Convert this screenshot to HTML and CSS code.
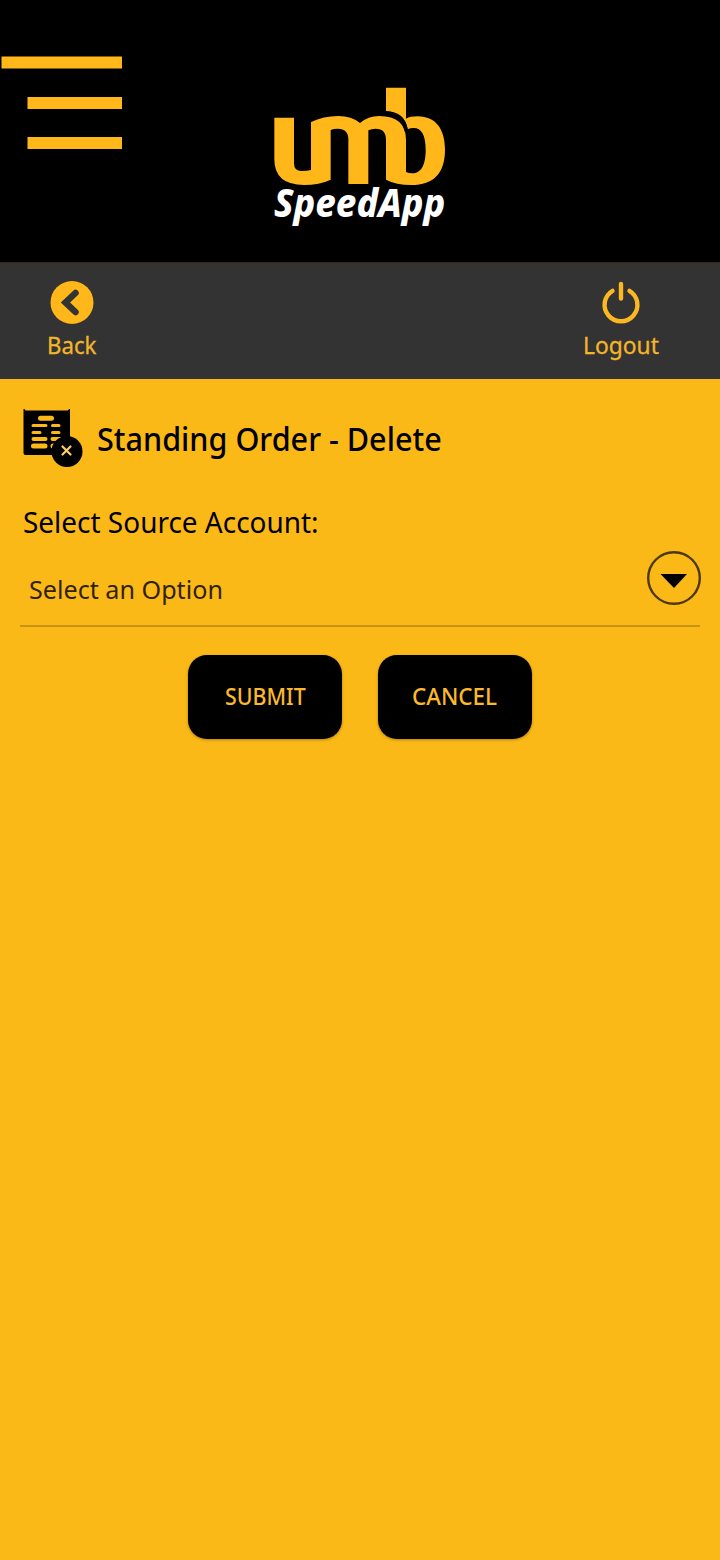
FILE: index.html
```html
<!DOCTYPE html>
<html lang="en">
<head>
<meta charset="utf-8">
<title>Standing Order - Delete</title>
<link rel="stylesheet" href="styles.css">
</head>
<body>
<header class="header">
  <svg class="menu" viewBox="0 0 124 96"><path d="M1.500 2.500h120.500v12H1.500zM27.500 43h94.500v12H27.500zM27.500 83h94.500v12H27.500z"/></svg>
  <svg class="logo" viewBox="0 0 600 480">
    <path class="gold" d="M43 113H102V250Q102 273 124 273Q142 273 153 270V126Q190 108 235 108Q275 108 300 129Q324 108 358 108Q438 108 438 180V276Q446 280 457 280C486 280 497 250 497 210C497 164 484 144 461 144Q450 144 443 148Q435 95 378 93V23H438V116Q450 109 473 109C529 109 555 150 555 209C555 278 522 315 454 315Q408 315 378 299V180Q378 146 347 146Q335 146 325 151V312H265V178Q265 146 233 146Q221 146 212 150V299Q178 315 132 315Q43 315 43 238Z"/>
    <path class="arc" d="M376 99Q431 102 439 154"/>
    <text class="brand" x="42" y="412" textLength="514" lengthAdjust="spacingAndGlyphs">SpeedApp</text>
  </svg>
</header>
<nav class="toolbar">
  <a class="tool">
    <svg class="tool-icon" viewBox="0 0 44 44"><circle class="gold" cx="22" cy="21.500" r="21.500"/><path class="chevron" d="M25.500 12L15.500 21.500L25.500 31"/></svg>
    <span class="tool-label back-label">Back</span>
  </a>
  <a class="tool">
    <svg class="tool-icon" viewBox="0 0 44 44"><path class="power" d="M13.500 9.800A16.400 16.400 0 1 0 30.500 9.800M22 3V17.500"/></svg>
    <span class="tool-label logout-label">Logout</span>
  </a>
</nav>
<main class="content">
  <div class="heading">
    <svg class="doc" viewBox="0 0 60 60">
      <path d="M.5 1H1.500L2.500 2.500H45L46 1H47V47H2.500Q.5 47 .5 45Z"/>
      <path class="page" d="M10 17.500H23M29.500 17.500H36M10 24.500H17M29.500 24.500H36"/>
      <path class="page medium" d="M10.500 31H22.500M29.500 31H37"/>
      <path class="page bold" d="M17.500 10.300H28.500M10.500 38H22M30 38H35"/>
      <circle cx="44" cy="43.500" r="15.500"/>
      <path class="cross" d="M39.500 38.500L47.500 46.500M47.500 38.500L39.500 46.500"/>
    </svg>
    <h1 class="title">Standing Order - Delete</h1>
  </div>
  <label class="label">Select Source Account:</label>
  <div class="select">
    <span class="value">Select an Option</span>
    <svg class="arrow" viewBox="0 0 56 56"><circle cx="28" cy="28" r="25.800"/><path d="M14.500 24H41L28 38Z"/></svg>
  </div>
  <div class="actions">
    <button class="button"><span class="submit">SUBMIT</span></button>
    <button class="button"><span class="cancel">CANCEL</span></button>
  </div>
</main>
</body>
</html>
```
FILE: styles.css
```css
* { box-sizing: border-box; }
body { margin: 0; min-height: 1560px; background: #fbb918; font-family: "Noto Sans", sans-serif; color: #000; }
.header { height: 262px; background: #000; display: flex; align-items: flex-start; }
.menu { width: 124px; height: 96px; margin-top: 54px; fill: #ffb719; }
.logo { width: 200px; height: 160px; margin: 80px 0 0 136px; }
.gold { fill: #ffb719; }
.arc { fill: none; stroke: #000; stroke-width: 11; }
.brand { font: italic 800 115px "Noto Sans", sans-serif; fill: #fff; }
.toolbar { height: 117px; background: #333; border-top: 1px solid #35280f; display: flex; justify-content: space-between; padding: 18px 49px 0 22px; }
.tool { width: 100px; display: flex; flex-direction: column; align-items: center; color: #f3b62b; }
.tool-icon { width: 44px; height: 44px; }
.chevron { fill: none; stroke: #333; stroke-width: 6.500; stroke-linecap: round; stroke-linejoin: miter; }
.power { fill: none; stroke: #fbb822; stroke-width: 4.400; stroke-linecap: round; }
.tool-label { font-size: 24px; line-height: 32px; margin-top: 4px; white-space: nowrap; -webkit-text-stroke: .3px #f3b62b; }
.back-label { transform: scaleX(.925); }
.logout-label { transform: scaleX(.95); }
.content { padding: 29px 20px 0; }
.heading { height: 60px; display: flex; align-items: center; padding-left: 3px; }
.doc { width: 60px; height: 60px; }
.cross { fill: none; stroke: #fbd06a; stroke-width: 2.200; stroke-linecap: round; }
.page { fill: none; stroke: #fbb918; stroke-width: 3; stroke-linecap: round; }
.medium { stroke-width: 4; }
.bold { stroke-width: 5; }
.title { margin: 2px 0 0 14px; font-size: 33px; line-height: 44px; font-weight: 500; white-space: nowrap; transform-origin: left; transform: scaleX(.926); }
.label { display: block; margin: 34px 0 0 3px; font-size: 29px; line-height: 40px; white-space: nowrap; transform-origin: left; transform: scaleX(.964); }
.select { height: 85px; border-bottom: 2px solid #c89217; display: flex; justify-content: space-between; padding-left: 9px; }
.value { font-size: 25.500px; line-height: 36px; margin-top: 29px; color: #30230a; white-space: nowrap; transform-origin: left; transform: scaleX(.986); }
.arrow { width: 56px; height: 56px; margin: 8px -2px 0 0; }
.arrow circle { fill: none; stroke: #4b370a; stroke-width: 2.400; }
.actions { display: flex; justify-content: center; gap: 36px; margin-top: 28px; }
.button { width: 154px; height: 84px; padding: 0 0 4px; border: 0; border-radius: 19px; background: #000; color: #fbb92b; font: 500 24px "Noto Sans", sans-serif; display: flex; align-items: center; justify-content: center; box-shadow: 0 1px 3px rgba(0,0,0,.3); }
.submit { transform: scaleX(.89); }
.cancel { transform: scaleX(.935); }
```
